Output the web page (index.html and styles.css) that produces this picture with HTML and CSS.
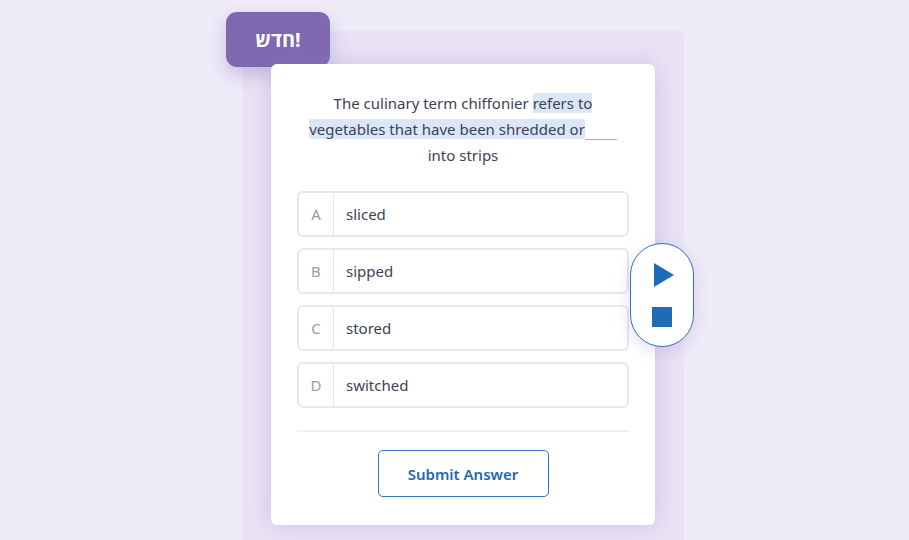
FILE: index.html
```html
<!DOCTYPE html>
<html lang="en">
<head>
  <meta charset="UTF-8">
  <meta name="viewport" content="width=device-width, initial-scale=1.0">
  <title>Quiz</title>
  <link rel="stylesheet" href="styles.css">
</head>
<body>
  <div class="panel">
    <div class="badge">חדש!</div>

    <div class="card">
      <p class="question">
        The culinary term chiffonier <mark>refers to vegetables that have been shredded or</mark><span class="blank"></span> into strips
      </p>

      <div class="options">
        <div class="option"><span class="letter">A</span><span class="answer">sliced</span></div>
        <div class="option"><span class="letter">B</span><span class="answer">sipped</span></div>
        <div class="option"><span class="letter">C</span><span class="answer">stored</span></div>
        <div class="option"><span class="letter">D</span><span class="answer">switched</span></div>
      </div>

      <hr class="divider">

      <div class="actions">
        <button class="submit">Submit Answer</button>
      </div>

      <div class="player">
        <svg width="22" height="24" viewBox="0 0 22 24"><path d="M1 0 L21 12 L1 24 Z" fill="#1f6bb5"/></svg>
        <svg width="20" height="20" viewBox="0 0 20 20"><rect width="20" height="20" fill="#1f6bb5"/></svg>
      </div>
    </div>
  </div>
</body>
</html>
```

FILE: styles.css
```css
body {
    margin: 0;
    background-color: #efebf8;
    font-family: "Noto Sans", "Open Sans", sans-serif;
    color: #3d4254;
    height: 540px;
    overflow: hidden;
  }

  .panel {
    position: relative;
    width: 442px;
    height: 510px;
    margin: 30px 0 0 242px;
    padding: 34px 29px 0;
    box-sizing: border-box;
    background-color: #e9e3f5;
    border-radius: 4px 4px 0 0;
  }

  .badge {
    position: absolute;
    left: -16px;
    top: -18px;
    width: 104px;
    height: 55px;
    display: flex;
    align-items: center;
    justify-content: center;
    background-color: #7e68b0;
    color: #fff;
    font-size: 20px;
    font-weight: 700;
    border-radius: 11px;
    box-shadow: 0 8px 18px rgba(110, 90, 170, 0.3);
    direction: ltr;
  }

  .card {
    position: relative;
    background-color: #fff;
    border-radius: 6px;
    padding: 26px 26px 28px;
    box-shadow: 0 0 22px rgba(150, 130, 200, 0.35);
  }

  .question {
    margin: 0 0 23px;
    text-align: center;
    font-size: 15px;
    line-height: 26px;
  }

  .question mark {
    background-color: #dbe7f6;
    color: inherit;
  }

  .blank {
    display: inline-block;
    width: 32px;
    border-bottom: 1px solid #a9abb8;
    vertical-align: -5px;
  }

  .options {
    display: flex;
    flex-direction: column;
    gap: 11px;
  }

  .option {
    display: flex;
    height: 46px;
    box-sizing: border-box;
    border: 2px solid #e8e7ee;
    border-radius: 6px;
    font-size: 15px;
  }

  .letter {
    width: 34px;
    display: flex;
    align-items: center;
    justify-content: center;
    color: #9a9caf;
    border-right: 1px solid #e8e7ee;
  }

  .answer {
    display: flex;
    align-items: center;
    padding-left: 12px;
  }

  .divider {
    border: 0;
    border-top: 2px solid #efeff3;
    margin: 22px 0 18px;
  }

  .actions {
    text-align: center;
  }

  .submit {
    width: 171px;
    height: 47px;
    background-color: #fff;
    border: 1px solid #2f74c0;
    border-radius: 5px;
    color: #2467b3;
    font-family: inherit;
    font-size: 15px;
    font-weight: 600;
  }

  .player {
    position: absolute;
    left: 359px;
    top: 179px;
    width: 64px;
    height: 104px;
    box-sizing: border-box;
    border: 1px solid #2f74c0;
    border-radius: 32px;
    background-color: #fff;
    box-shadow: 0 4px 16px rgba(140, 120, 200, 0.25);
    display: flex;
    flex-direction: column;
    align-items: center;
    justify-content: center;
    gap: 20px;
  }

  .player svg:first-child {
    margin-left: 4px;
  }
```
